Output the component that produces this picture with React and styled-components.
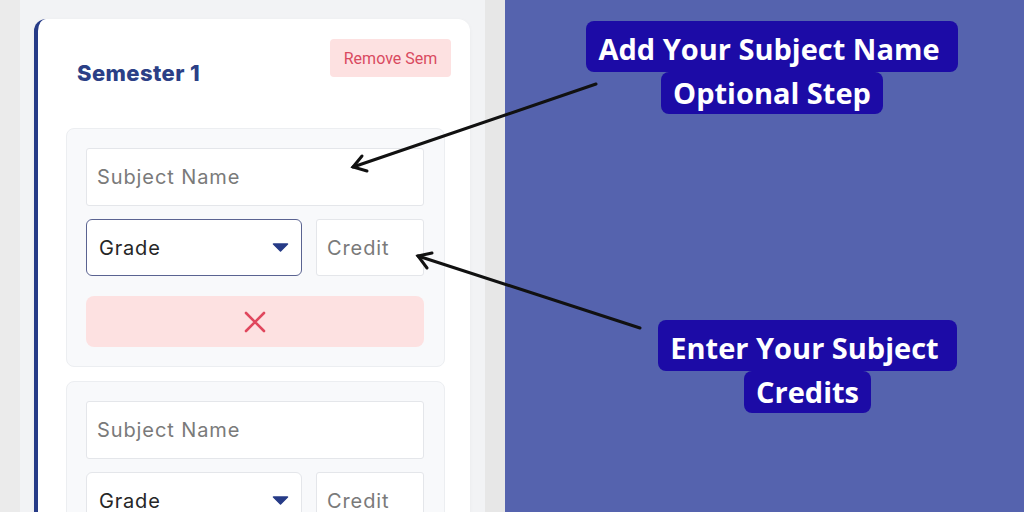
import React from "react";
import styled, { createGlobalStyle } from "styled-components";

const Global = createGlobalStyle`
  html, body { margin: 0; padding: 0; }
  body { width: 1024px; height: 512px; overflow: hidden; font-family: "Inter", "Noto Sans", sans-serif; }
  * { box-sizing: border-box; }
`;

const Page = styled.div`
  position: relative;
  display: flex;
  width: 1024px;
  height: 512px;
  overflow: hidden;
`;

const Gutter = styled.div`
  width: ${(p) => p.$w}px;
  flex: none;
  background: ${(p) => p.$bg};
`;

const Panel = styled.div`
  width: 465px;
  flex: none;
  background: #f2f3f5;
  padding: 19px 15px 0 14px;
  overflow: hidden;
`;

const Card = styled.div`
  background: #ffffff;
  border-left: 4px solid #263b87;
  border-radius: 12px 12px 0 0;
  height: 560px;
  box-shadow: 0 1px 4px rgba(0, 0, 0, 0.04);
  padding: 20px 25px 0 28px;
`;

const Header = styled.div`
  display: flex;
  justify-content: space-between;
  align-items: flex-start;
  margin: 0 -6px 0 11px;
  height: 89px;
`;

const Title = styled.h2`
  margin: 0;
  padding-top: 21px;
  font-family: "Inter", sans-serif;
  font-weight: 800;
  font-size: 22px;
  line-height: 26px;
  letter-spacing: 0.4px;
  color: #2b3f86;
`;

const RemoveSem = styled.button`
  height: 38px;
  width: 121px;
  border: none;
  border-radius: 4px;
  background: #fde1e1;
  color: #d94a5f;
  font-family: "Roboto", sans-serif;
  font-size: 16px;
  padding: 0;
`;

const Groups = styled.div`
  display: flex;
  flex-direction: column;
  gap: 14px;
`;

const Group = styled.div`
  background: #f8f9fb;
  border: 1px solid #eceef1;
  border-radius: 8px;
  padding: 19px 20px 19px 19px;
  display: flex;
  flex-direction: column;
`;

const TextInput = styled.div`
  height: ${(p) => p.$h || 58}px;
  width: ${(p) => (p.$w ? `${p.$w}px` : "100%")};
  flex: none;
  background: #fff;
  border: 1px solid #e4e6ea;
  border-radius: 3px;
  display: flex;
  align-items: center;
  padding-left: 10px;
  font-family: "Inter", sans-serif;
  font-size: 20px;
  letter-spacing: 0.9px;
  color: #7a7a7a;
`;

const Row = styled.div`
  display: flex;
  gap: 14px;
  margin-top: 13px;
`;

const Select = styled.div`
  width: 216px;
  height: 57px;
  background: #fff;
  border: 1px solid ${(p) => (p.$focused ? "#5a6391" : "#e4e6ea")};
  border-radius: 6px;
  display: flex;
  align-items: center;
  justify-content: space-between;
  padding: 0 12px 0 12px;
  font-family: "Inter", sans-serif;
  font-size: 20px;
  letter-spacing: 0.8px;
  color: #262626;
`;

const Caret = styled.svg`
  width: 17px;
  height: 9px;
`;

const DeleteBtn = styled.button`
  margin-top: 20px;
  height: 51px;
  width: 100%;
  border: none;
  border-radius: 8px;
  background: #fde1e1;
  display: flex;
  align-items: center;
  justify-content: center;
  padding: 0;
`;

const Blue = styled.div`
  flex: 1;
  background: #5563ae;
  position: relative;
`;

const Callout = styled.div`
  position: absolute;
  left: ${(p) => p.$x}px;
  top: ${(p) => p.$y}px;
  width: ${(p) => p.$w}px;
  display: flex;
  flex-direction: column;
  align-items: center;
`;

const Line = styled.div`
  background: #1c0ba6;
  color: #fff;
  font-family: "Open Sans", sans-serif;
  font-weight: 700;
  font-size: 29px;
  white-space: nowrap;
  line-height: 42px;
  padding: ${(p) => (p.$first ? "7px 18px 2px 12px" : "0 12px")};
  border-radius: 8px;
`;

const Arrows = styled.svg`
  position: absolute;
  left: 0;
  top: 0;
  pointer-events: none;
`;

const XIcon = () => (
  <svg width="22" height="22" viewBox="0 0 22 22">
    <path d="M2 2 L20 20 M20 2 L2 20" stroke="#e0475d" strokeWidth="2.6" strokeLinecap="round" fill="none" />
  </svg>
);

const SubjectGroup = ({ focused }) => (
  <Group>
    <TextInput>Subject Name</TextInput>
    <Row>
      <Select $focused={focused}>
        Grade
        <Caret viewBox="0 0 17 9">
          <path d="M1.5 1 H15.5 L8.5 8 Z" fill="#263b87" stroke="#263b87" strokeWidth="1.5" strokeLinejoin="round" />
        </Caret>
      </Select>
      <TextInput $w={108} $h={57}>Credit</TextInput>
    </Row>
    <DeleteBtn>
      <XIcon />
    </DeleteBtn>
  </Group>
);

export default function App() {
  return (
    <>
      <Global />
      <Page>
        <Gutter $w={20} $bg="#ebebeb" />
        <Panel>
          <Card>
            <Header>
              <Title>Semester 1</Title>
              <RemoveSem>Remove Sem</RemoveSem>
            </Header>
            <Groups>
              <SubjectGroup focused />
              <SubjectGroup />
            </Groups>
          </Card>
        </Panel>
        <Gutter $w={20} $bg="#e7e7e7" />
        <Blue>
          <Callout $x={79} $y={21} $w={376}>
            <Line $first>Add Your Subject Name</Line>
            <Line>Optional Step</Line>
          </Callout>
          <Callout $x={150} $y={320} $w={305}>
            <Line $first>Enter Your Subject</Line>
            <Line>Credits</Line>
          </Callout>
        </Blue>
        <Arrows width="1024" height="512" viewBox="0 0 1024 512">
          <g stroke="#111" strokeWidth="3" strokeLinecap="round" fill="none">
            <path d="M596 84 L353 167" />
            <path d="M367 171 L353 167 L362 156" />
            <path d="M640 328 L418 256" />
            <path d="M427 268 L418 256 L432 253" />
          </g>
        </Arrows>
      </Page>
    </>
  );
}
